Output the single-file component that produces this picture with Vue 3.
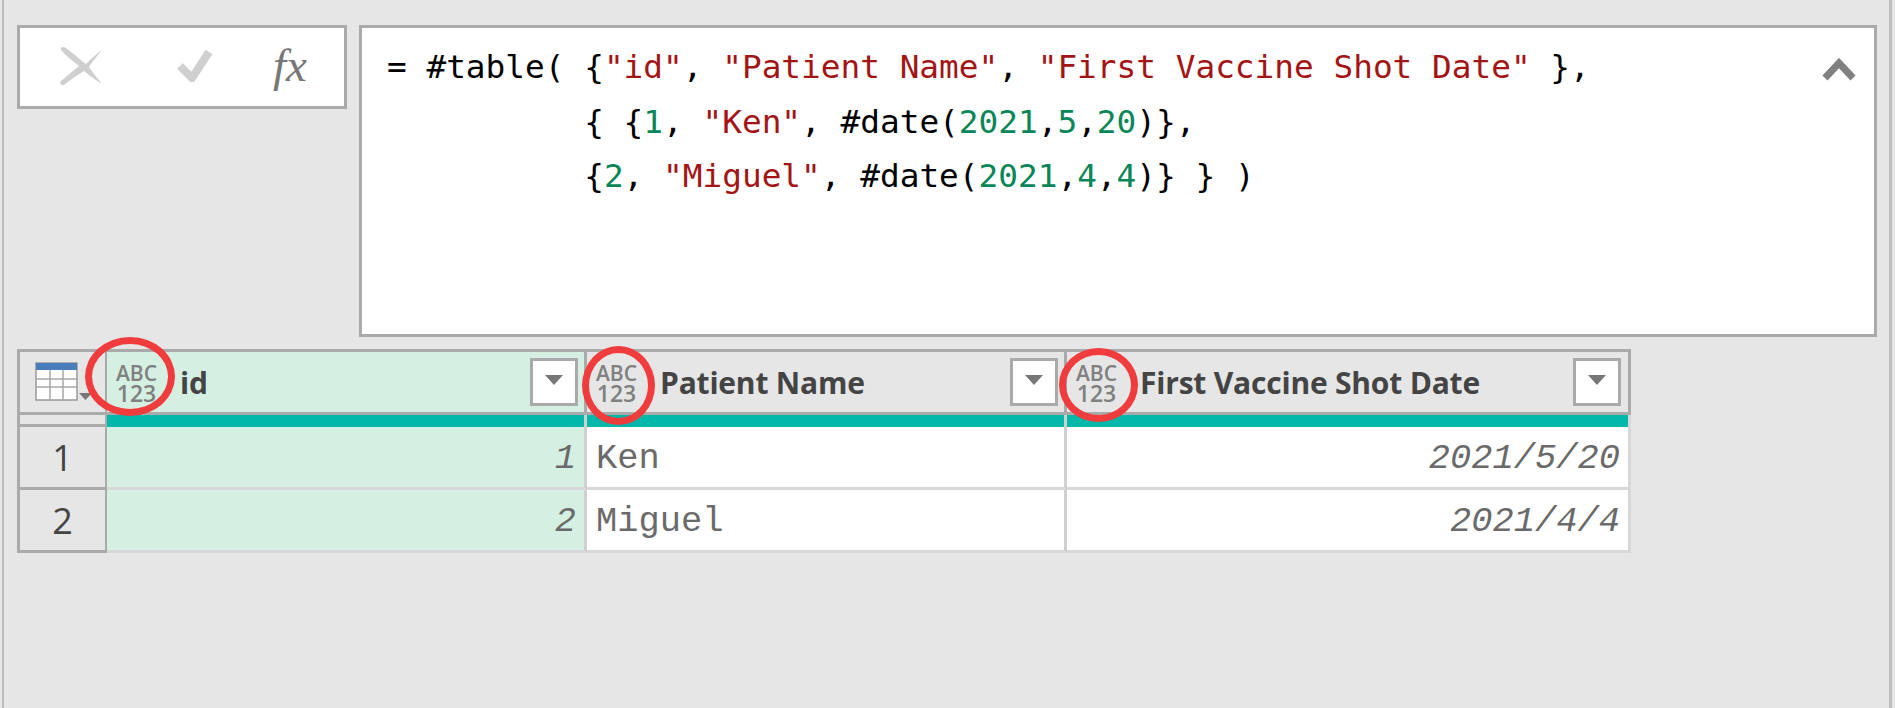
<script setup>
// tokens of the formula bar: k = plain, s = string, n = number
const formula = [
  [['k', '= #table( {'], ['s', '"id"'], ['k', ', '], ['s', '"Patient Name"'], ['k', ', '], ['s', '"First Vaccine Shot Date"'], ['k', ' },']],
  [['k', '          { {'], ['n', '1'], ['k', ', '], ['s', '"Ken"'], ['k', ', #date('], ['n', '2021'], ['k', ','], ['n', '5'], ['k', ','], ['n', '20'], ['k', ')},']],
  [['k', '          {'], ['n', '2'], ['k', ', '], ['s', '"Miguel"'], ['k', ', #date('], ['n', '2021'], ['k', ','], ['n', '4'], ['k', ','], ['n', '4'], ['k', ')} } )']],
]

const columns = [
  { name: 'id', selected: true },
  { name: 'Patient Name' },
  { name: 'First Vaccine Shot Date' },
]

const rows = [
  { n: 1, cells: ['1', 'Ken', '2021/5/20'] },
  { n: 2, cells: ['2', 'Miguel', '2021/4/4'] },
]
</script>

<template>
  <div class="page">
    <div class="frame">
      <div class="top">
        <div class="tools">
          <svg class="ic-x" width="44" height="40" viewBox="0 0 44 40">
            <path d="M2 4 C1 1 4 0 7 2 C16 9 23 15 27 18 C32 13 37 8 43 4 C38 10 33 16 30 21 C34 27 39 33 43 38 C36 34 30 29 25 25 C18 29 11 34 5 39 C2 40 0 37 2 35 C8 30 14 25 20 20 C14 15 7 10 2 4 Z" />
          </svg>
          <svg class="ic-check" width="36" height="34" viewBox="0 0 36 34">
            <path d="M3 18 L15 30 L32 4" />
          </svg>
          <span class="fx">fx</span>
        </div>
        <div class="formula">
          <div v-for="(line, i) in formula" :key="i" class="line"><span v-for="(tok, j) in line" :key="j" :class="tok[0]">{{ tok[1] }}</span></div>
          <svg class="chevron" width="34" height="24" viewBox="0 0 34 24">
            <path d="M3 20 L17 5 L31 20" />
          </svg>
        </div>
      </div>

      <div class="table">
        <div class="corner">
          <svg width="58" height="40" viewBox="0 0 58 40">
            <rect x="1" y="1" width="41" height="37" fill="#fff" stroke="#999" stroke-width="1.5" />
            <rect x="1" y="1" width="41" height="7" fill="#4a7ebb" />
            <path d="M15 8 V38 M28 8 V38 M1 17 H42 M1 25 H42" stroke="#a8a8a8" stroke-width="1.5" fill="none" />
            <path d="M44 31 H57 L50.5 38 Z" fill="#777" />
          </svg>
        </div>
        <div v-for="(col, i) in columns" :key="col.name" class="head" :class="{ sel: col.selected, last: i === 2 }">
          <div class="type"><span>ABC</span><span class="digits">123</span></div>
          <span class="label">{{ col.name }}</span>
          <div class="filter"><i></i></div>
          <div class="ring" :class="'ring' + i"></div>
        </div>

        <div class="gap-head"></div>
        <div v-for="(col, i) in columns" :key="i" class="quality" :class="{ last: i === 2 }"></div>

        <template v-for="row in rows" :key="row.n">
          <div class="num">{{ row.n }}</div>
          <div
            v-for="(val, i) in row.cells"
            :key="i"
            class="cell"
            :class="{ sel: i === 0, right: i !== 1, last: i === 2 }"
          >{{ val }}</div>
        </template>
      </div>
    </div>
  </div>
</template>

<style>
html, body {
  margin: 0;
  background: #e6e6e6;
}
</style>

<style scoped>
.page {
  width: 1895px;
  height: 708px;
  padding: 0 3px 0 2px;
  box-sizing: border-box;
  background: #e6e6e6;
  overflow: hidden;
}

.frame {
  height: 100%;
  box-sizing: border-box;
  border-left: 2px solid #bdbdbd;
  border-right: 3px solid #bdbdbd;
  padding: 25px 0 0 13px;
}

/* formula bar */
.top {
  display: flex;
  align-items: flex-start;
  gap: 12px;
}

.tools {
  width: 330px;
  height: 84px;
  box-sizing: border-box;
  border: 3px solid #aaa;
  background: #fff;
  position: relative;
  display: flex;
  align-items: center;
  padding-left: 39px;
}

.ic-x {
  flex: none;
  margin-top: -2px;
}

.ic-x path {
  fill: #cfcfcf;
}

.ic-check {
  flex: none;
  margin-left: 74px;
  margin-top: -4px;
}

.ic-check path {
  fill: none;
  stroke: #cfcfcf;
  stroke-width: 8;
}

.fx {
  margin-left: 60px;
  margin-top: -4px;
  font: italic 47px/50px "Liberation Serif", serif;
  color: #777;
}

.formula {
  width: 1518px;
  height: 312px;
  box-sizing: border-box;
  border: 3px solid #aaa;
  background: #fff;
  padding: 12px 0 0 25px;
  position: relative;
  font: 32.75px/54.5px "DejaVu Sans Mono", monospace;
  color: #000;
}

.line {
  white-space: pre;
}

.s {
  color: #a31515;
}

.n {
  color: #098658;
}

.chevron {
  position: absolute;
  top: 30px;
  right: 18px;
}

.chevron path {
  fill: none;
  stroke: #808080;
  stroke-width: 7;
}

/* grid */
.table {
  margin-top: 12px;
  width: 1614px;
  display: grid;
  grid-template-columns: 90px 480px 480px 564px;
  grid-template-rows: 66px 12px 63px 63px;
}

.corner,
.head {
  box-sizing: border-box;
  border-top: 3px solid #aaa;
  border-bottom: 3px solid #aaa;
  background: #e6e6e6;
}

.corner {
  border-left: 3px solid #aaa;
  border-right: 2px solid #aaa;
  padding: 10px 0 0 15px;
}

.corner svg {
  display: block;
}

.head {
  display: flex;
  align-items: center;
  border-right: 3px solid #aaa;
  padding: 0 6px 0 10px;
  position: relative;
}

.head.sel {
  background: #d5f0e2;
}

.head.last {
  padding-right: 7px;
}

.type {
  width: 39px;
  flex: none;
  display: flex;
  flex-direction: column;
  align-items: center;
  font: 600 21px/20px "Open Sans", sans-serif;
  color: #808080;
  margin-top: 1px;
}

.digits {
  font-size: 23px;
}

.label {
  margin-left: 24px;
  flex: 1;
  font: 700 30px "Open Sans", sans-serif;
  letter-spacing: -0.2px;
  color: #444;
  white-space: nowrap;
}

.filter {
  width: 48px;
  height: 48px;
  box-sizing: border-box;
  flex: none;
  border: 3px solid #aaa;
  background: #fff;
  display: flex;
  align-items: center;
  justify-content: center;
}

.filter i {
  width: 0;
  height: 0;
  border-left: 9px solid transparent;
  border-right: 9px solid transparent;
  border-top: 10px solid #777;
  margin-top: -4px;
}

/* the red marks sit over the header cells */
.ring {
  position: absolute;
  box-sizing: border-box;
  border: 7px solid #f03c3c;
  border-radius: 50%;
  pointer-events: none;
}

.ring0 {
  left: -22px;
  top: -15px;
  width: 90px;
  height: 79px;
}

.ring1 {
  left: -5px;
  top: -6px;
  width: 73px;
  height: 79px;
}

.ring2 {
  left: -8px;
  top: -4px;
  width: 79px;
  height: 74px;
}

.gap-head {
  border-left: 3px solid #aaa;
  border-right: 2px solid #aaa;
  border-bottom: 3px solid #aaa;
}

.quality {
  background: #02b8aa;
  border-right: 3px solid #d0d0d0;
}

.quality.last {
  border-right-color: #d8d8d8;
}

.num {
  box-sizing: border-box;
  border-left: 3px solid #aaa;
  border-right: 2px solid #aaa;
  border-bottom: 3px solid #aaa;
  background: #e6e6e6;
  font: 36px "Open Sans", sans-serif;
  color: #444;
  display: flex;
  align-items: center;
  justify-content: center;
}

.cell {
  box-sizing: border-box;
  background: #fff;
  border-right: 3px solid #d0d0d0;
  border-bottom: 3px solid #d8d8d8;
  font: 35.4px/64px "Liberation Mono", monospace;
  color: #6a6a6a;
  padding: 0 8px 0 9px;
  white-space: nowrap;
}

.cell.sel {
  background: #d5f0e2;
}

.cell.right {
  text-align: right;
  font-style: italic;
}

.cell.last {
  border-right-color: #d8d8d8;
}
</style>
